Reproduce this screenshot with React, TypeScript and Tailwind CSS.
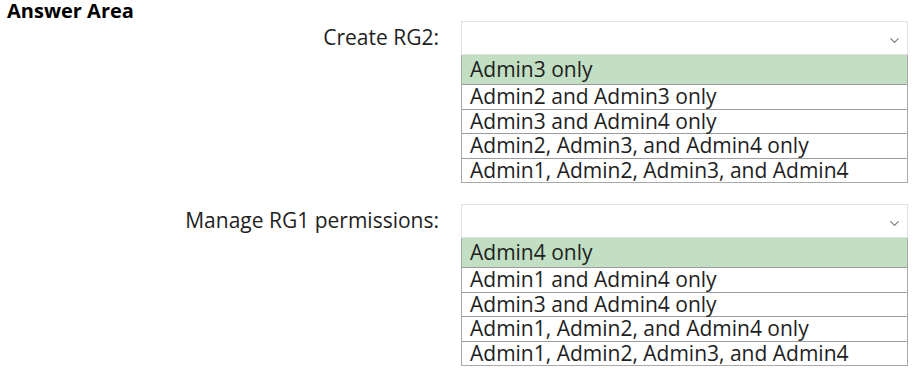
import { ChevronDown } from "lucide-react";

type Question = {
  label: string;
  options: string[];
};

const questions: Question[] = [
  {
    label: "Create RG2:",
    options: [
      "Admin3 only",
      "Admin2 and Admin3 only",
      "Admin3 and Admin4 only",
      "Admin2, Admin3, and Admin4 only",
      "Admin1, Admin2, Admin3, and Admin4",
    ],
  },
  {
    label: "Manage RG1 permissions:",
    options: [
      "Admin4 only",
      "Admin1 and Admin4 only",
      "Admin3 and Admin4 only",
      "Admin1, Admin2, and Admin4 only",
      "Admin1, Admin2, Admin3, and Admin4",
    ],
  },
];

function AnswerRow({ question }: { question: Question }) {
  return (
    <div className="flex">
      <div className="w-[461px] shrink-0 pr-[22px] pt-[3px] text-right text-[21px] leading-[26px] text-[#1e1e1e]">
        {question.label}
      </div>
      <div className="w-[447px] shrink-0">
        <div className="flex h-[34px] items-center justify-end border border-[#e2e2e2] pr-[5px] pt-[4px]">
          <ChevronDown className="h-[15px] w-[15px] text-[#808080]" strokeWidth={2} />
        </div>
        <div className="border border-t-0 border-[#a9a9a9]">
          {question.options.map((option, index) => (
            <div
              key={option}
              className={`pl-[8px] text-[21px] text-[#1e1e1e] ${
                index === 0
                  ? "h-[29px] bg-[#c2dfc3] pt-[1px] leading-[27px]"
                  : "h-[24.5px] border-t border-[#9c9c9c] leading-[23px]"
              }`}
            >
              {option}
            </div>
          ))}
        </div>
      </div>
    </div>
  );
}

export default function App() {
  return (
    <div
      className="h-[376px] w-[913px] bg-white"
      style={{ fontFamily: '"Open Sans", "Noto Sans", sans-serif' }}
    >
      <h1 className="h-[21px] pl-[7px] text-[20px] font-bold leading-[22px] text-black">Answer Area</h1>
      <div className="flex flex-col gap-[21px]">
        {questions.map((question) => (
          <AnswerRow key={question.label} question={question} />
        ))}
      </div>
    </div>
  );
}
